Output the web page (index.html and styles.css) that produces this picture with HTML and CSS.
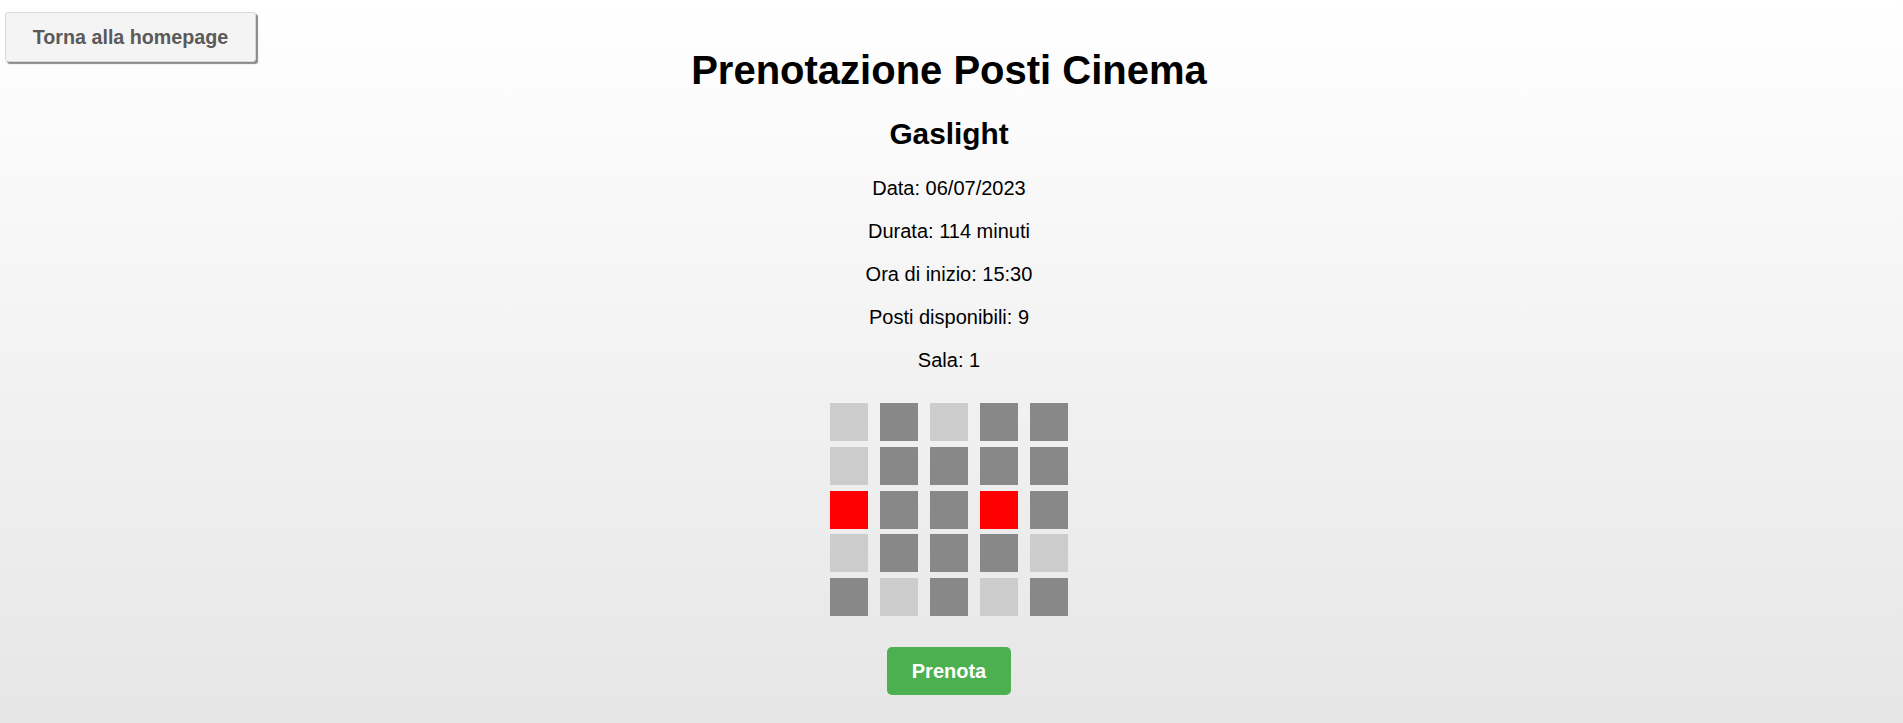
FILE: index.html
```html
<!DOCTYPE html>
<html lang="it">
<head>
<meta charset="utf-8">
<title>Prenotazione Posti Cinema</title>
<link rel="stylesheet" href="styles.css">
</head>
<body>
<button class="back-btn" type="button">Torna alla homepage</button>
<main class="booking">
  <h1 class="title">Prenotazione Posti Cinema</h1>
  <h2 class="film">Gaslight</h2>
  <div class="info">
    <p>Data: 06/07/2023</p>
    <p>Durata: 114 minuti</p>
    <p>Ora di inizio: 15:30</p>
    <p>Posti disponibili: 9</p>
    <p>Sala: 1</p>
  </div>
  <div class="seats">
    <div class="seat free"></div><div class="seat taken"></div><div class="seat free"></div><div class="seat taken"></div><div class="seat taken"></div>
    <div class="seat free"></div><div class="seat taken"></div><div class="seat taken"></div><div class="seat taken"></div><div class="seat taken"></div>
    <div class="seat selected"></div><div class="seat taken"></div><div class="seat taken"></div><div class="seat selected"></div><div class="seat taken"></div>
    <div class="seat free"></div><div class="seat taken"></div><div class="seat taken"></div><div class="seat taken"></div><div class="seat free"></div>
    <div class="seat taken"></div><div class="seat free"></div><div class="seat taken"></div><div class="seat free"></div><div class="seat taken"></div>
  </div>
  <button class="book-btn" type="button">Prenota</button>
</main>
</body>
</html>
```

FILE: styles.css
```css
html, body {
  margin: 0;
  padding: 0;
}

body {
  min-height: 723px;
  font-family: "Liberation Sans", Arial, sans-serif;
  color: #000;
  background: linear-gradient(to bottom, #ffffff 0px, #e6e6e6 723px);
  position: relative;
}

.back-btn {
  position: absolute;
  top: 12px;
  left: 5px;
  box-sizing: border-box;
  width: 251px;
  height: 50px;
  padding: 0;
  font-family: "Liberation Sans", Arial, sans-serif;
  font-size: 19.7px;
  font-weight: bold;
  color: #5a5a5a;
  background: #f4f4f4;
  border: 1px solid #d8d8d8;
  border-radius: 3px;
  box-shadow: 2px 2px 1px #8a8a8a;
  cursor: pointer;
}

.booking {
  display: flex;
  flex-direction: column;
  align-items: center;
  padding: 47px 5px 0 0;
}

.title {
  margin: 0;
  font-size: 40px;
  line-height: 46px;
  font-weight: bold;
}

.film {
  margin: 24px 0 0;
  font-size: 29.8px;
  line-height: 34px;
  font-weight: bold;
}

.info {
  margin-top: 26px;
  display: flex;
  flex-direction: column;
  align-items: center;
  gap: 20px;
}

.info p {
  margin: 0;
  font-size: 20px;
  line-height: 23px;
}

.seats {
  margin-top: 31px;
  display: grid;
  grid-template-columns: repeat(5, 38px);
  grid-auto-rows: 38px;
  column-gap: 12px;
  row-gap: 5.75px;
}

.seat.free {
  background: #cccccc;
}

.seat.taken {
  background: #888888;
}

.seat.selected {
  background: #ff0000;
}

.book-btn {
  margin-top: 31px;
  box-sizing: border-box;
  width: 124px;
  height: 48px;
  padding: 0;
  font-family: "Liberation Sans", Arial, sans-serif;
  font-size: 20px;
  font-weight: bold;
  color: #fff;
  background: #4caf50;
  border: none;
  border-radius: 5px;
  cursor: pointer;
}
```
